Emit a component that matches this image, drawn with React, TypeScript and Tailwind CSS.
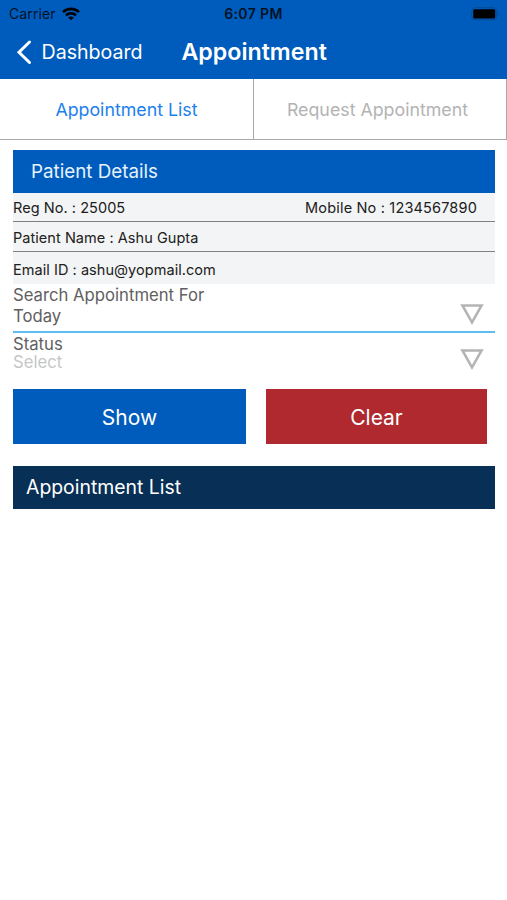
import React from "react";

function WifiIcon() {
  return (
    <svg width="18" height="14" viewBox="0 0 18 14" className="ml-[6px] block" fill="none" stroke="#000" strokeWidth="2.6">
      <path d="M1 5.2C5.5 .7 12.5 .7 17 5.2" />
      <path d="M4 8.4C6.8 5.6 11.2 5.6 14 8.4" />
      <path d="M9 13.2L6.2 10.5C7.8 9.1 10.2 9.1 11.8 10.5Z" fill="#000" stroke="none" />
    </svg>
  );
}

function BatteryIcon() {
  return (
    <svg width="29" height="14" viewBox="0 0 29 14" className="block">
      <rect x="0.7" y="0.7" width="25" height="12.2" rx="3.6" fill="none" stroke="#004a9b" strokeWidth="1" />
      <rect x="2.2" y="2.2" width="22" height="9.2" rx="1.5" fill="#000" />
      <path d="M27 4.9C28.4 5.5 28.4 8.1 27 8.7Z" fill="#004a9b" />
    </svg>
  );
}

function Triangle() {
  return (
    <svg width="24" height="22" viewBox="0 0 24 22" className="block shrink-0">
      <path d="M2.4 2.4H21.6L12 19.4Z" fill="none" stroke="#b4b4b4" strokeWidth="2.5" />
    </svg>
  );
}

export default function App() {
  return (
    <div className="h-[900px] w-[507px] overflow-hidden bg-white font-['Inter','Liberation_Sans',sans-serif]">
      <header className="h-[79px] bg-[#005cbc]">
        <div className="grid h-[27px] grid-cols-3 items-center text-[14px] leading-none text-[#001226]">
          <div className="flex items-center pl-[9px]">
            <span className="tracking-[0.1px]">Carrier</span>
            <WifiIcon />
          </div>
          <span className="pt-px text-center font-semibold tracking-[0.4px]">6:07 PM</span>
          <div className="flex justify-end pr-[7px]">
            <BatteryIcon />
          </div>
        </div>
        <div className="flex h-[50px] items-center text-white">
          <svg width="16" height="26" viewBox="0 0 16 26" className="ml-4 block" fill="none" stroke="#fff" strokeWidth="3" strokeLinecap="round">
            <path d="M13.5 3L3 13.2L13.5 23.5" />
          </svg>
          <span className="ml-[9.5px] w-[140px] pt-[2px] text-[19.6px] leading-none">Dashboard</span>
          <h1 className="pt-px text-[23.2px] leading-none font-semibold">Appointment</h1>
        </div>
      </header>

      <nav className="flex h-[61px] border-b border-[#a9a9a9] text-[17.8px]">
        <button className="w-[254px] border-r border-[#a9a9a9] pt-[2px] text-[#1c80ee]">Appointment List</button>
        <button className="w-[253px] border-r border-[#a9a9a9] pt-[2px] pr-[5px] text-[#b3b3b3]">Request Appointment</button>
      </nav>

      <main className="pt-[10px] pr-3 pl-[13px]">
        <h2 className="flex h-[43px] items-center bg-[#005cbc] pt-[2px] pl-[18px] text-[18.8px] text-[#e6f2ff]">Patient Details</h2>
        <div className="bg-[#f3f4f5] text-[14.5px] leading-none tracking-[0.05px] text-[#202020]">
          <div className="flex h-[29px] items-center justify-between border-b border-[#808080] pt-[2px] pr-[18px]">
            <span>Reg No. : 25005</span>
            <span className="tracking-[0.17px]">Mobile No : 1234567890</span>
          </div>
          <div className="flex h-[30px] items-center border-b border-[#808080] pt-[3px]">Patient Name : Ashu Gupta</div>
          <div className="flex h-[32px] items-center pt-[4px]">Email ID : ashu@yopmail.com</div>
        </div>

        <div className="flex h-[49px] items-end justify-between border-b-2 border-[#5dbdf0] pr-[11px] pb-[4px] text-[16.7px] text-[#606060]">
          <div className="leading-[21px]">
            <div>Search Appointment For</div>
            <div>Today</div>
          </div>
          <div className="pb-[2px]">
            <Triangle />
          </div>
        </div>
        <div className="flex h-[56px] justify-between pr-[11px] text-[16.7px] text-[#606060]">
          <div className="pt-[2px] leading-[18px]">
            <div>Status</div>
            <div className="text-[#c6c6c6]">Select</div>
          </div>
          <div className="pt-[15px]">
            <Triangle />
          </div>
        </div>

        <div className="flex gap-[20px] text-[21px] text-white">
          <button className="h-[55px] w-[233px] bg-[#005cbc] pt-[3px]">Show</button>
          <button className="h-[55px] w-[221px] bg-[#af292e] pt-[3px]">Clear</button>
        </div>
        <h2 className="mt-[22px] flex h-[43px] items-center bg-[#082f55] pt-px pl-[13px] text-[19.4px] text-white">Appointment List</h2>
      </main>
    </div>
  );
}
